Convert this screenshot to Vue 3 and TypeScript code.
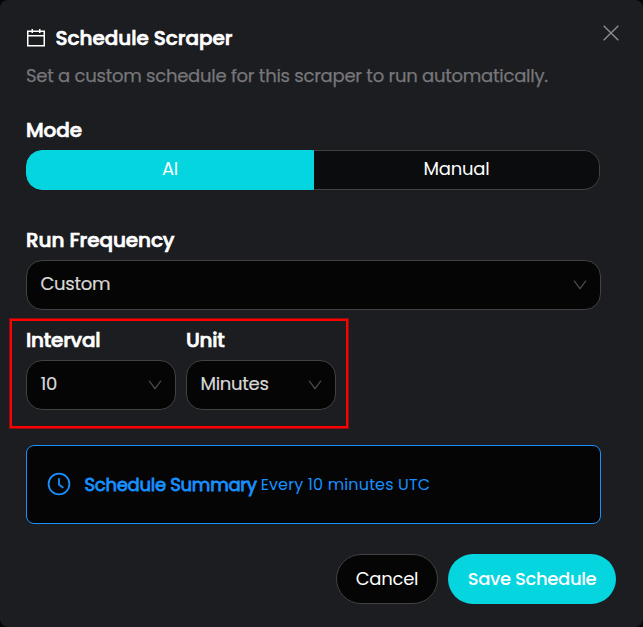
<script setup lang="ts">
import { ref } from 'vue'

const mode = ref<'AI' | 'Manual'>('AI')
const frequency = ref('Custom')
const fields = [
  { label: 'Interval', value: '10', kind: 'interval' },
  { label: 'Unit', value: 'Minutes', kind: 'unit' },
]
</script>

<template>
  <main class="backdrop">
    <section class="modal">
      <header class="header">
        <svg class="calendar" viewBox="0 0 20 20">
          <path d="M1.75 3.25h16.5v14.5H1.75zM1.75 7.75h16.5M6.25 1v4M13.75 1v4" />
        </svg>
        <h1 class="title">Schedule Scraper</h1>
        <button class="close" aria-label="Close">
          <svg viewBox="0 0 16 16"><path d="M.7.7l14.6 14.6M15.3.7L.7 15.3" /></svg>
        </button>
      </header>
      <p class="description">Set a custom schedule for this scraper to run automatically.</p>

      <h2 class="label mode-label">Mode</h2>
      <div class="segments">
        <button class="segment" :class="{ active: mode === 'AI' }" @click="mode = 'AI'">AI</button>
        <button class="segment" :class="{ active: mode === 'Manual' }" @click="mode = 'Manual'">Manual</button>
      </div>

      <h2 class="label frequency-label">Run Frequency</h2>
      <div class="select">
        <span>{{ frequency }}</span>
        <svg class="chevron" viewBox="0 0 14 10"><path d="M1 .7l6 8 6-8" /></svg>
      </div>

      <div class="highlight">
        <div v-for="field in fields" :key="field.kind" class="field">
          <h2 class="label" :class="field.kind">{{ field.label }}</h2>
          <div class="select">
            <span>{{ field.value }}</span>
            <svg class="chevron" viewBox="0 0 14 10"><path d="M1 .7l6 8 6-8" /></svg>
          </div>
        </div>
      </div>

      <div class="summary">
        <svg class="clock" viewBox="0 0 24 24">
          <circle cx="12" cy="12" r="10.4" />
          <path d="M12 6.2v6.6l4.4 3" />
        </svg>
        <strong class="summary-title">Schedule Summary</strong>
        <span class="summary-text">Every 10 minutes UTC</span>
      </div>

      <footer class="footer">
        <button class="button cancel">Cancel</button>
        <button class="button save">Save Schedule</button>
      </footer>
    </section>
  </main>
</template>

<style>
body {
  background: #050506;
}
</style>

<style scoped>
* {
  box-sizing: border-box;
}
.backdrop {
  font-family: Poppins, Inter, "Liberation Sans", sans-serif;
  width: 643px;
  height: 627px;
  overflow: hidden;
  background: #050506;
}
.modal {
  height: 627px;
  padding: 24px 27px 0 26px;
  border-radius: 8px;
  background: #1c1d21;
  color: #fff;
  display: flex;
  flex-direction: column;
  white-space: nowrap;
}
h1,
h2,
p {
  margin: 0;
}
button {
  font: inherit;
  color: inherit;
  border: 0;
  padding: 0;
  background: none;
}
svg {
  display: block;
  flex: none;
  fill: none;
  stroke: currentColor;
}
.header {
  display: flex;
  align-items: center;
  height: 28px;
}
.calendar {
  width: 20px;
  height: 20px;
  stroke-width: 1.5;
}
.title {
  margin-left: 9.6px;
  font-size: 20px;
  line-height: 28px;
  font-weight: 500;
  letter-spacing: -0.06px;
  -webkit-text-stroke: 0.7px currentColor;
}
.close {
  margin: -10px -3px 0 auto;
  width: 16px;
  height: 16px;
  color: #8d8d8f;
}
.close svg {
  width: 16px;
  height: 16px;
  stroke-width: 1.4;
}
.description {
  margin-top: 10px;
  height: 28px;
  line-height: 28px;
  font-size: 18px;
  font-weight: 400;
  letter-spacing: -0.25px;
  -webkit-text-stroke: 0.25px currentColor;
  color: #77777a;
}
.label {
  height: 30px;
  line-height: 30px;
  font-size: 20px;
  font-weight: 500;
  letter-spacing: -0.1px;
  -webkit-text-stroke: 0.7px currentColor;
}
.label.interval {
  letter-spacing: -0.22px;
}
.label.unit {
  letter-spacing: -0.3px;
}
.mode-label {
  margin-top: 25px;
}
.segments {
  display: flex;
  width: 574px;
  height: 40px;
  margin-top: 5px;
  border-radius: 16px;
  overflow: hidden;
}
.segment {
  flex: 0 0 286px;
  padding-bottom: 2px;
  font-size: 18px;
  line-height: 36px;
  letter-spacing: -0.25px;
  background: #0b0c0e;
  border: 1px solid #424242;
  border-left: 0;
  border-radius: 0 16px 16px 0;
}
.segment.active {
  flex-basis: 288px;
  border: 1px solid #04d5df;
  background: #04d5df;
  border-radius: 16px 0 0 16px;
}
.frequency-label {
  margin-top: 35px;
}
.select {
  display: flex;
  align-items: center;
  justify-content: space-between;
  height: 50px;
  padding: 0 13.5px 3px;
  border: 1px solid #424242;
  border-radius: 16px;
  background: #050505;
  color: #d9d9d9;
  font-size: 18px;
  letter-spacing: -0.28px;
  -webkit-text-stroke: 0.2px currentColor;
}
.frequency-label + .select {
  width: 575px;
  margin-top: 5px;
}
.chevron {
  width: 14px;
  height: 10px;
  margin-top: 2px;
  color: #4b4b4b;
  stroke-width: 1.2;
}
.highlight {
  display: flex;
  gap: 10px;
  width: 340px;
  height: 111px;
  margin: 8px 0 0 -17px;
  padding: 4px 0 0 14px;
  border: 3px solid #f00;
  outline: 1px solid #8e0d10;
  outline-offset: -1px;
}
.field {
  width: 150px;
}
.field .select {
  margin-top: 5px;
}
.summary {
  display: flex;
  align-items: center;
  width: 575px;
  height: 79px;
  margin-top: 16px;
  padding: 0 0 1px 19.5px;
  border: 1px solid #1890ff;
  border-radius: 8px;
  background: #050505;
  color: #1890ff;
}
.clock {
  width: 24px;
  height: 24px;
  margin-right: 14px;
  stroke-width: 1.8;
}
.summary-title {
  font-size: 18px;
  font-weight: 400;
  letter-spacing: -0.27px;
  -webkit-text-stroke: 0.8px currentColor;
}
.summary-text {
  margin-left: 4px;
  font-size: 16px;
  letter-spacing: 0.14px;
}
.footer {
  display: flex;
  justify-content: flex-end;
  gap: 10px;
  margin-top: 30px;
}
.button {
  height: 50px;
  padding-bottom: 2px;
  border-radius: 25px;
  font-size: 18px;
}
.cancel {
  width: 102px;
  border: 1px solid #424242;
  background: #050505;
  letter-spacing: -0.25px;
}
.save {
  width: 168px;
  background: #04d5df;
  font-weight: 500;
  letter-spacing: -0.37px;
}
</style>
